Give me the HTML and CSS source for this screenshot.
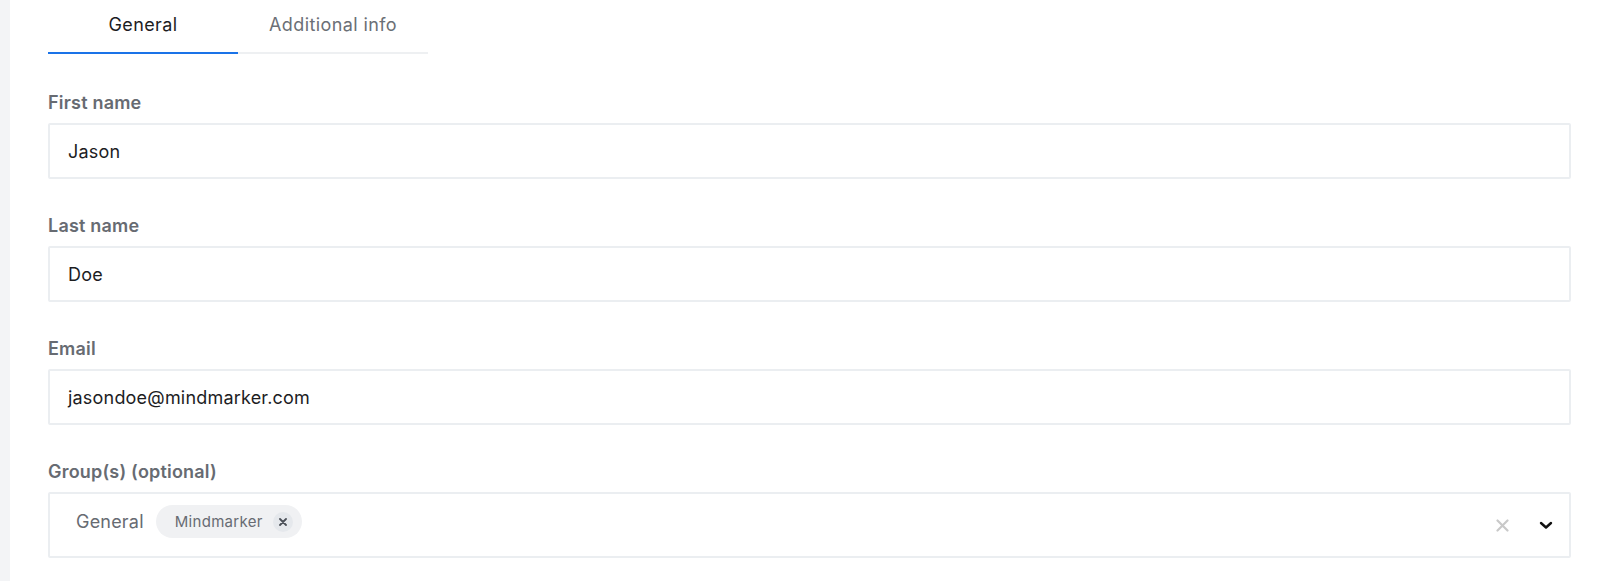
FILE: index.html
```html
<!DOCTYPE html>
<html>
<head>
    <title>Edit user</title>
    <link rel="stylesheet" href="styles.css">
</head>
<body>
    <div class="page">
        <div class="tabs">
            <div class="tab active">General</div>
            <div class="tab">Additional info</div>
        </div>

        <form class="user-form">
            <div class="field">
                <label>First name</label>
                <div class="input">Jason</div>
            </div>

            <div class="field">
                <label>Last name</label>
                <div class="input">Doe</div>
            </div>

            <div class="field">
                <label>Email</label>
                <div class="input">jasondoe@mindmarker.com</div>
            </div>

            <div class="field">
                <label>Group(s) (optional)</label>
                <div class="input select">
                    <div class="values">
                        <span class="group-name">General</span>
                        <span class="chip">Mindmarker
                            <span class="chip-remove">
                                <svg width="8" height="8" viewBox="0 0 8 8">
                                    <path d="M1 1 L7 7 M7 1 L1 7" stroke="#4b5058" stroke-width="1.8" stroke-linecap="round"/>
                                </svg>
                            </span>
                        </span>
                    </div>
                    <div class="controls">
                        <svg class="clear" width="13" height="13" viewBox="0 0 13 13">
                            <path d="M1.5 1.5 L11.5 11.5 M11.5 1.5 L1.5 11.5" stroke="#c9c9c9" stroke-width="2.2" stroke-linecap="round"/>
                        </svg>
                        <svg class="chevron" width="14" height="10" viewBox="0 0 14 10">
                            <path d="M2 3 L7 7.5 L12 3" fill="none" stroke="#111" stroke-width="2.4" stroke-linecap="round" stroke-linejoin="round"/>
                        </svg>
                    </div>
                </div>
            </div>
        </form>
    </div>
</body>
</html>
```

FILE: styles.css
```css
body {
    font-family: Inter, "Noto Sans", Arial, sans-serif;
    background-color: #fff;
    color: #1d1d1f;
    margin: 0;
    padding: 0;
}

.page {
    border-left: 10px solid #f3f4f6;
    padding: 0 29px 0 38px;
    min-height: 581px;
    box-sizing: border-box;
}

.tabs {
    display: flex;
    width: 380px;
    border-bottom: 2px solid #eef0f2;
}

.tab {
    width: 190px;
    height: 52px;
    line-height: 50px;
    text-align: center;
    font-size: 18px;
    letter-spacing: 0.4px;
    color: #6b6f76;
    margin-bottom: -2px;
    border-bottom: 2px solid transparent;
}

.tab.active {
    color: #1d1d1f;
    border-bottom-color: #1a73e8;
}

.user-form {
    margin-top: 39px;
}

.field {
    margin-bottom: 37px;
}

.field label {
    display: block;
    font-size: 18px;
    line-height: 20px;
    font-weight: 600;
    letter-spacing: 0.2px;
    color: #676b72;
    margin-bottom: 10px;
}

.input {
    height: 56px;
    border: 2px solid #ebeef1;
    border-radius: 2px;
    box-sizing: border-box;
    padding: 0 18px;
    display: flex;
    align-items: center;
    font-size: 18px;
    letter-spacing: 0.2px;
    color: #1d1d1f;
}

.select {
    height: 66px;
    padding: 0 16px 0 26px;
    justify-content: space-between;
}

.values {
    display: flex;
    align-items: center;
    gap: 12px;
    align-self: flex-start;
    margin-top: 11px;
}

.group-name {
    color: #676b72;
}

.chip {
    display: flex;
    align-items: center;
    gap: 10px;
    height: 33px;
    padding: 0 9px 0 19px;
    border-radius: 17px;
    background-color: #f0f1f3;
    font-size: 15px;
    letter-spacing: 0.3px;
    color: #676b72;
}

.chip-remove {
    width: 20px;
    height: 20px;
    border-radius: 50%;
    background-color: #e5e8ec;
    display: flex;
    align-items: center;
    justify-content: center;
}

.controls {
    display: flex;
    align-items: center;
    gap: 30px;
}
```
